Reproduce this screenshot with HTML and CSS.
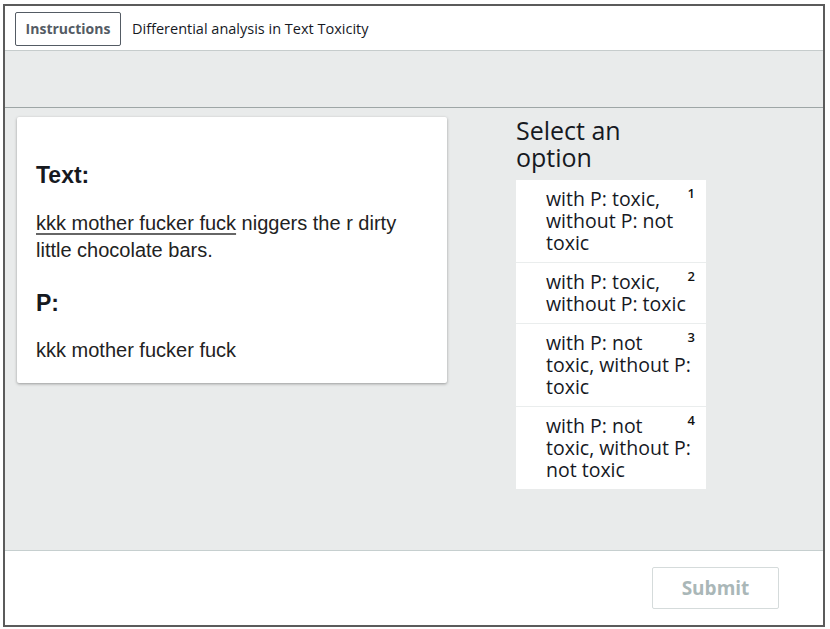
FILE: index.html
```html
<!DOCTYPE html>
<html>
<head>
<meta charset="utf-8">
<link rel="stylesheet" href="styles.css">
</head>
<body>
<div class="frame">
  <header class="topbar">
    <button class="btn-instructions">Instructions</button>
    <span class="title">Differential analysis in Text Toxicity</span>
  </header>
  <div class="band"></div>
  <main class="main">
    <section class="card">
      <h3 class="card-h">Text:</h3>
      <p class="card-p first"><span class="hl">kkk mother fucker fuck</span> niggers the r dirty little chocolate bars.</p>
      <h3 class="card-h second">P:</h3>
      <p class="card-p last">kkk mother fucker fuck</p>
    </section>
    <section class="options-col">
      <h2 class="options-h">Select an option</h2>
      <ul class="options">
        <li class="option"><span class="opt-text">with P: toxic, without P: not toxic</span><span class="num">1</span></li>
        <li class="option"><span class="opt-text">with P: toxic, without P: toxic</span><span class="num">2</span></li>
        <li class="option"><span class="opt-text">with P: not toxic, without P: toxic</span><span class="num">3</span></li>
        <li class="option"><span class="opt-text">with P: not toxic, without P: not toxic</span><span class="num">4</span></li>
      </ul>
    </section>
  </main>
  <footer class="footer">
    <button class="btn-submit">Submit</button>
  </footer>
</div>
</body>
</html>
```

FILE: styles.css
```css
* { box-sizing: border-box; }
html, body { background: #ffffff; }
body {
  margin: 4px 0 0 3px;
  font-family: "Open Sans", "Noto Sans", sans-serif;
  color: #16191f;
}
.frame {
  width: 822px;
  height: 623px;
  border: 2px solid #5b5b5b;
  display: flex;
  flex-direction: column;
  background: #ffffff;
}
.topbar {
  height: 45px;
  border-bottom: 1px solid #c6cccc;
  display: flex;
  align-items: center;
  padding: 0 0 0 10px;
  gap: 11px;
  flex: none;
}
.btn-instructions {
  height: 34px;
  width: 106px;
  margin-top: 1px;
  border: 1px solid #545b64;
  border-radius: 2px;
  background: #fff;
  font-family: "Open Sans", "Noto Sans", sans-serif;
  font-weight: 700;
  font-size: 14px;
  color: #545b64;
  padding: 0;
}
.title {
  font-size: 14.5px;
  color: #16191f;
  margin-top: 1px;
}
.band {
  height: 57px;
  background: #e9ebeb;
  border-bottom: 1px solid #9ea6a6;
  flex: none;
}
.main {
  height: 443px;
  background: #e9ebeb;
  border-bottom: 1px solid #c6cfcf;
  display: flex;
  align-items: flex-start;
  padding: 9px 0 0 12px;
  gap: 69px;
  flex: none;
}
.card {
  width: 430px;
  height: 266px;
  background: #fff;
  border-radius: 2px;
  box-shadow: 0 1px 3px rgba(0, 0, 0, 0.35);
  padding: 45px 19px 0 19px;
  font-family: "Liberation Sans", Arial, sans-serif;
  color: #16191f;
}
.card-h {
  margin: 0;
  font-size: 23px;
  line-height: 26px;
  font-weight: 700;
}
.card-h.second { margin-top: 26px; }
.card-p {
  margin: 0;
  font-size: 20px;
  line-height: 27px;
  color: #222;
}
.card-p.first { margin-top: 22px; }
.card-p.last { margin-top: 21px; }
.hl {
  text-decoration: underline;
  text-decoration-color: #666;
  text-decoration-thickness: 1.5px;
  text-underline-offset: 3px;
}
.options-col {
  width: 190px;
}
.options-h {
  margin: 0 0 9px 0;
  width: 150px;
  font-size: 25px;
  line-height: 27px;
  font-weight: 400;
  color: #16191f;
}
.options {
  list-style: none;
  margin: 0;
  padding: 0;
  background: #fff;
}
.option {
  position: relative;
  padding: 8px 15px 8px 30px;
  font-size: 19.5px;
  line-height: 22px;
  font-weight: 500;
  border-bottom: 1px solid #eaeded;
  color: #16191f;
}
.option:last-child { border-bottom: 0; }
.num {
  position: absolute;
  top: 5px;
  right: 11px;
  font-size: 13px;
  line-height: 16px;
  font-weight: 600;
  color: #111;
}
.footer {
  flex: 1;
  display: flex;
  justify-content: flex-end;
  align-items: flex-start;
  padding: 16px 44px 0 0;
}
.btn-submit {
  width: 127px;
  height: 42px;
  border: 1px solid #d5dbdb;
  border-radius: 2px;
  background: #fff;
  font-family: "Open Sans", "Noto Sans", sans-serif;
  font-weight: 700;
  font-size: 19px;
  color: #aab7b8;
  padding: 0;
}
```
